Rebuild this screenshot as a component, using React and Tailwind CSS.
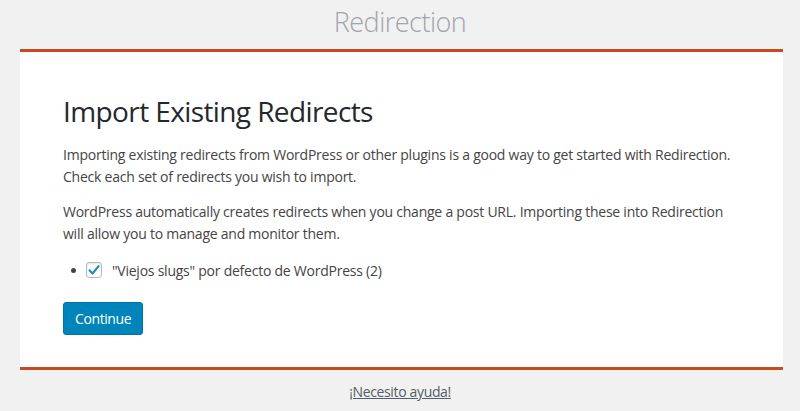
export default function App() {
  const font = { fontFamily: '"Open Sans", "Noto Sans", sans-serif' };
  return (
    <div className="h-[411px] w-[800px] bg-[#f1f1f1] overflow-hidden" style={font}>
      <div className="h-[49px] flex items-center justify-center pb-[4px]">
        <h1 className="text-[27px] font-light text-[#a0a5aa] tracking-[-0.5px]">Redirection</h1>
      </div>

      <div className="ml-[20px] w-[763px] h-[321px] bg-white border-t-[3px] border-b-[3px] border-[#ca4a1f] pl-[43px] pr-[30px] pt-[41px]">
        <h2 className="text-[28px] leading-[36px] text-[#23282d] tracking-[-0.6px] mb-[15px]">Import Existing Redirects</h2>

        <p className="text-[14px] leading-[22px] text-[#444] tracking-[-0.24px] mb-[13px]">
          Importing existing redirects from WordPress or other plugins is a good way to get started with Redirection.
          <br />
          Check each set of redirects you wish to import.
        </p>
        <p className="text-[14px] leading-[22px] text-[#444] tracking-[-0.24px] mb-[13px]">
          WordPress automatically creates redirects when you change a post URL. Importing these into Redirection
          <br />
          will allow you to manage and monitor them.
        </p>

        <ul className="pl-[8px]">
          <li className="flex items-center h-[24px] text-[14px] text-[#444] tracking-[-0.24px]">
            <span className="w-[5px] h-[5px] rounded-full bg-[#444] mr-[10px]" />
            <span className="w-[16px] h-[16px] border border-[#b4b9be] rounded-[3px] bg-white flex items-center justify-center mr-[10px] shadow-[inset_0_1px_2px_rgba(0,0,0,0.1)]">
              <svg width="14" height="14" viewBox="0 0 20 20">
                <path d="M3.5 10.5 L8 15 L16.5 4.5" fill="none" stroke="#1e8cbe" strokeWidth="3" strokeLinecap="round" strokeLinejoin="round" />
              </svg>
            </span>
            <span>"Viejos slugs" por defecto de WordPress (2)</span>
          </li>
        </ul>

        <button className="mt-[20px] h-[33px] px-[11px] bg-[#0085ba] border border-[#0073aa] rounded-[3px] text-white text-[14px] tracking-[-0.4px]">
          Continue
        </button>
      </div>

      <div className="flex justify-center pt-[11px]">
        <a className="text-[14px] text-[#555d66] underline tracking-[-0.35px]" href="#">¡Necesito ayuda!</a>
      </div>
    </div>
  );
}
